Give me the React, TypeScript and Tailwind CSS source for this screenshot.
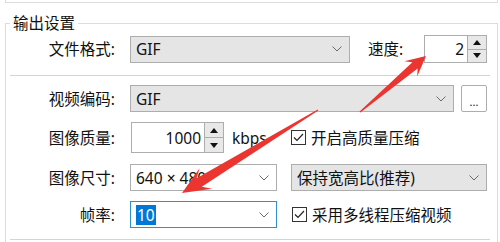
import type { ReactNode } from "react";

const FONT = '"Noto Sans", "Noto Sans CJK SC", sans-serif';

// tapered screenshot arrow, tail -> tip
function arrow(tx: number, ty: number, px: number, py: number, head: number, hw: number, sw: number) {
  const dx = px - tx;
  const dy = py - ty;
  const len = Math.hypot(dx, dy);
  const ux = dx / len;
  const uy = dy / len;
  const nx = -uy;
  const ny = ux;
  const bx = px - head * ux;
  const by = py - head * uy;
  const kx = px - head * 0.72 * ux;
  const ky = py - head * 0.72 * uy;
  const pts = [
    [tx + nx * 0.6, ty + ny * 0.6],
    [kx + nx * sw, ky + ny * sw],
    [bx + nx * hw, by + ny * hw],
    [px, py],
    [bx - nx * hw, by - ny * hw],
    [kx - nx * sw, ky - ny * sw],
    [tx - nx * 0.6, ty - ny * 0.6],
  ];
  return pts.map((p) => `${p[0].toFixed(1)},${p[1].toFixed(1)}`).join(" ");
}

function Chevron() {
  return (
    <svg width="10" height="6" viewBox="0 0 10 6" className="shrink-0">
      <path d="M0.5 0.5 L5 5 L9.5 0.5" fill="none" stroke="#6b6b6b" strokeWidth="1" />
    </svg>
  );
}

function Combo({
  w,
  gray,
  focused,
  children,
}: {
  w: string;
  gray?: boolean;
  focused?: boolean;
  children: ReactNode;
}) {
  return (
    <div
      className={`${w} flex h-[27px] shrink-0 items-center justify-between border pl-[5px] pr-[7px] ${
        gray ? "bg-[#e5e5e5]" : "bg-white"
      } ${focused ? "border-[#2f8fcf]" : "border-[#adadad]"}`}
    >
      <div className="flex items-center">{children}</div>
      <Chevron />
    </div>
  );
}

function SpinButtons() {
  return (
    <div className="flex h-full w-[19px] shrink-0 flex-col border-l border-[#adadad] bg-[#e8e8e8]">
      <div className="flex flex-1 items-center justify-center border-b border-[#adadad]">
        <svg width="8" height="5" viewBox="0 0 8 5">
          <path d="M0 5 L4 0 L8 5 Z" fill="#111" />
        </svg>
      </div>
      <div className="flex flex-1 items-center justify-center">
        <svg width="8" height="5" viewBox="0 0 8 5">
          <path d="M0 0 L8 0 L4 5 Z" fill="#111" />
        </svg>
      </div>
    </div>
  );
}

function Spin({ w, h, value }: { w: string; h: string; value: string }) {
  return (
    <div className={`${w} ${h} flex shrink-0 border border-[#adadad] bg-white`}>
      <div className="flex flex-1 items-center justify-end pr-[3px]">{value}</div>
      <SpinButtons />
    </div>
  );
}

function Check({ label }: { label: string }) {
  return (
    <div className="flex items-center gap-[5px]">
      <div className="flex h-[15px] w-[15px] shrink-0 items-center justify-center border border-[#333] bg-white">
        <svg width="11" height="9" viewBox="0 0 11 9">
          <path d="M1 4.5 L4 7.5 L10 1" fill="none" stroke="#222" strokeWidth="1.2" />
        </svg>
      </div>
      <span>{label}</span>
    </div>
  );
}

function Label({ children }: { children: ReactNode }) {
  return <div className="w-[110px] shrink-0 pr-[1px] text-right">{children}</div>;
}

export default function App() {
  return (
    <div
      className="relative h-[242px] w-[500px] overflow-hidden bg-white text-[15.5px] leading-[20px] text-[#111]"
      style={{ fontFamily: FONT }}
    >
      <div className="ml-[5px] h-[3px] w-[493px] border-x border-b border-[#dcdcdc]" />

      <fieldset className="ml-[5px] mt-[12px] h-[260px] w-[493px] border border-[#dcdcdc]">
        <legend className="ml-[4px] px-[3px] leading-[17px]">输出设置</legend>

        <div className="mt-[3px] flex items-center">
          <Label>文件格式:</Label>
          <div className="ml-[14px]">
            <Combo w="w-[220px]" gray>
              GIF
            </Combo>
          </div>
          <div className="ml-[18px] w-[38px] shrink-0">速度:</div>
          <div className="ml-[18px]">
            <Spin w="w-[63px]" h="h-[28px]" value="2" />
          </div>
        </div>

        <div className="ml-[4px] mt-[12px] w-[480px] border-t border-[#d4d4d4]" />

        <div className="mt-[9px] flex items-center">
          <Label>视频编码:</Label>
          <div className="ml-[14px]">
            <Combo w="w-[324px]" gray>
              GIF
            </Combo>
          </div>
          <div className="ml-[7px] flex h-[27px] w-[26px] items-end justify-center rounded-[2px] border border-[#adadad] bg-white pb-[3px] text-[11px] leading-[12px]">
            ...
          </div>
        </div>

        <div className="mt-[10px] flex items-center">
          <Label>图像质量:</Label>
          <div className="ml-[15px]">
            <Spin w="w-[93px]" h="h-[31px]" value="1000" />
          </div>
          <div className="ml-[8px] w-[52px] shrink-0">kbps</div>
          <div className="ml-[7px]">
            <Check label="开启高质量压缩" />
          </div>
        </div>

        <div className="mt-[11px] flex items-center">
          <Label>图像尺寸:</Label>
          <div className="ml-[14px]">
            <Combo w="w-[147px]">640 × 480</Combo>
          </div>
          <div className="ml-[14px]">
            <Combo w="w-[196px]" gray>
              保持宽高比(推荐)
            </Combo>
          </div>
        </div>

        <div className="mt-[10px] flex items-center">
          <Label>帧率:</Label>
          <div className="ml-[14px]">
            <Combo w="w-[147px]" focused>
              <span className="bg-[#0078d7] px-[1px] text-white">10</span>
            </Combo>
          </div>
          <div className="ml-[15px]">
            <Check label="采用多线程压缩视频" />
          </div>
        </div>

        <div className="ml-[4px] mt-[11px] w-[480px] border-t border-[#d4d4d4]" />
      </fieldset>

      <svg className="pointer-events-none absolute left-0 top-0" width="500" height="242" viewBox="0 0 500 242">
        <polygon points={arrow(360, 112, 426, 56, 20, 10, 4)} fill="#ea3530" />
        <polygon points={arrow(318, 110, 182, 193, 28, 12, 5)} fill="#ea3530" />
      </svg>
    </div>
  );
}
